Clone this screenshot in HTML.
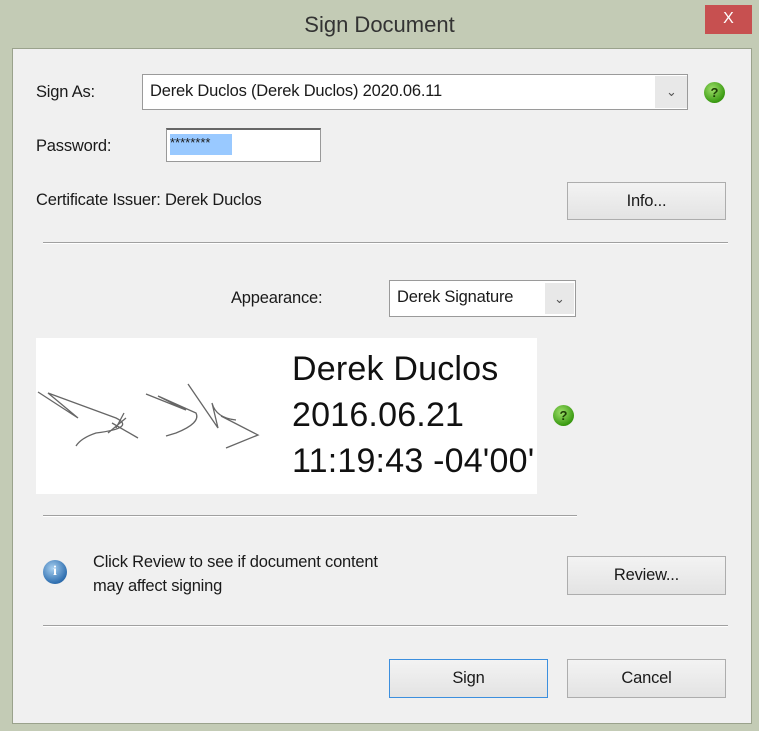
<!DOCTYPE html>
<html><head><style>
*{margin:0;padding:0;box-sizing:border-box}
body{width:759px;height:731px;background:#c3cbb5;font-family:"Liberation Sans",sans-serif;color:#1a1a1a;position:relative;overflow:hidden}
.a{position:absolute}
.t{font-size:16.5px;white-space:nowrap;letter-spacing:-0.2px}
.btn{position:absolute;background:linear-gradient(#f3f3f3,#e3e3e3);border:1px solid #adadad;font-size:16.5px;text-align:center;letter-spacing:-0.2px}
.sep{position:absolute;height:2px;border-top:1px solid #a0a0a0;border-bottom:1px solid #fff}
.help{position:absolute;width:21px;height:21px;border-radius:50%;background:radial-gradient(circle at 40% 35%,#9fe06a,#3a9a12 70%,#2a7a0a);color:#1d3d05;font-weight:bold;font-size:13px;text-align:center;line-height:21px}
</style></head><body>
<div class="a" style="left:0;top:0;width:759px;height:48px;text-align:center;font-size:22px;line-height:50px;color:#333">Sign Document</div>
<div class="a" style="left:705px;top:5px;width:47px;height:29px;background:#c75050;color:#fff;font-size:16px;text-align:center;line-height:28px">X</div>
<div class="a" style="left:12px;top:48px;width:740px;height:676px;background:#f0f0f0;border:1px solid #9aa28c"></div>

<div class="a t" style="left:36px;top:83px">Sign As:</div>
<div class="a" style="left:142px;top:74px;width:546px;height:36px;border:1px solid #9a9a9a;background:#fff"></div>
<div class="a" style="left:655px;top:76px;width:32px;height:32px;background:#e8e8e8"></div>
<div class="a" style="left:666px;top:84px;font-size:13px;color:#555">&#8964;</div>
<div class="a t" style="left:150px;top:82px">Derek Duclos (Derek Duclos) 2020.06.11</div>
<div class="help" style="left:704px;top:82px">?</div>

<div class="a t" style="left:36px;top:137px">Password:</div>
<div class="a" style="left:166px;top:128px;width:155px;height:34px;border:1px solid #999;border-top:2px solid #666;background:#fff"></div>
<div class="a" style="left:170px;top:134px;width:62px;height:21px;background:#99c9ff;font-size:13px;line-height:18px;color:#1a1a1a">********</div>

<div class="a t" style="left:36px;top:191px">Certificate Issuer: Derek Duclos</div>
<div class="btn" style="left:567px;top:182px;width:159px;height:38px;line-height:36px">Info...</div>
<div class="sep" style="left:43px;top:242px;width:685px"></div>

<div class="a t" style="left:231px;top:289px">Appearance:</div>
<div class="a" style="left:389px;top:280px;width:187px;height:37px;border:1px solid #9a9a9a;background:#fff"></div>
<div class="a" style="left:545px;top:283px;width:29px;height:31px;background:#e8e8e8"></div>
<div class="a" style="left:554px;top:291px;font-size:13px;color:#555">&#8964;</div>
<div class="a t" style="left:397px;top:288px">Derek Signature</div>

<div class="a" style="left:36px;top:338px;width:501px;height:156px;background:#fff"></div>
<svg class="a" style="left:36px;top:338px" width="260" height="156" viewBox="0 0 260 156">
<g fill="none" stroke="#666" stroke-width="1.3">
<path d="M2 54 L42 80 L12 55 L80 80 Q100 90 60 95 Q45 100 40 108"/>
<path d="M72 95 L90 80 M76 85 L102 100 M80 90 L88 75"/>
<path d="M110 56 L150 72 L122 58 L160 75 Q165 85 140 95 L130 98"/>
<path d="M152 46 L182 90 L176 65 Q180 80 200 82 M185 78 L222 97 L190 110"/>
</g></svg>
<div class="a" style="left:292px;top:346px;font-size:34px;line-height:46px;color:#111;letter-spacing:0.2px">Derek Duclos<br>2016.06.21<br>11:19:43 -04'00'</div>
<div class="help" style="left:553px;top:405px">?</div>
<div class="sep" style="left:43px;top:515px;width:534px"></div>

<div class="a" style="left:43px;top:560px;width:24px;height:24px;border-radius:50%;background:radial-gradient(circle at 40% 35%,#a8d0f0,#2f6fb0 70%,#1d4f88);color:#fff;font-weight:bold;font-size:14px;text-align:center;line-height:24px;font-family:'Liberation Serif',serif">i</div>
<div class="a t" style="left:93px;top:550px;line-height:24px">Click Review to see if document content<br>may affect signing</div>
<div class="btn" style="left:567px;top:556px;width:159px;height:39px;line-height:37px">Review...</div>
<div class="sep" style="left:43px;top:625px;width:685px"></div>

<div class="btn" style="left:389px;top:659px;width:159px;height:39px;line-height:37px;border-color:#3c8fde">Sign</div>
<div class="btn" style="left:567px;top:659px;width:159px;height:39px;line-height:37px">Cancel</div>
</body></html>
